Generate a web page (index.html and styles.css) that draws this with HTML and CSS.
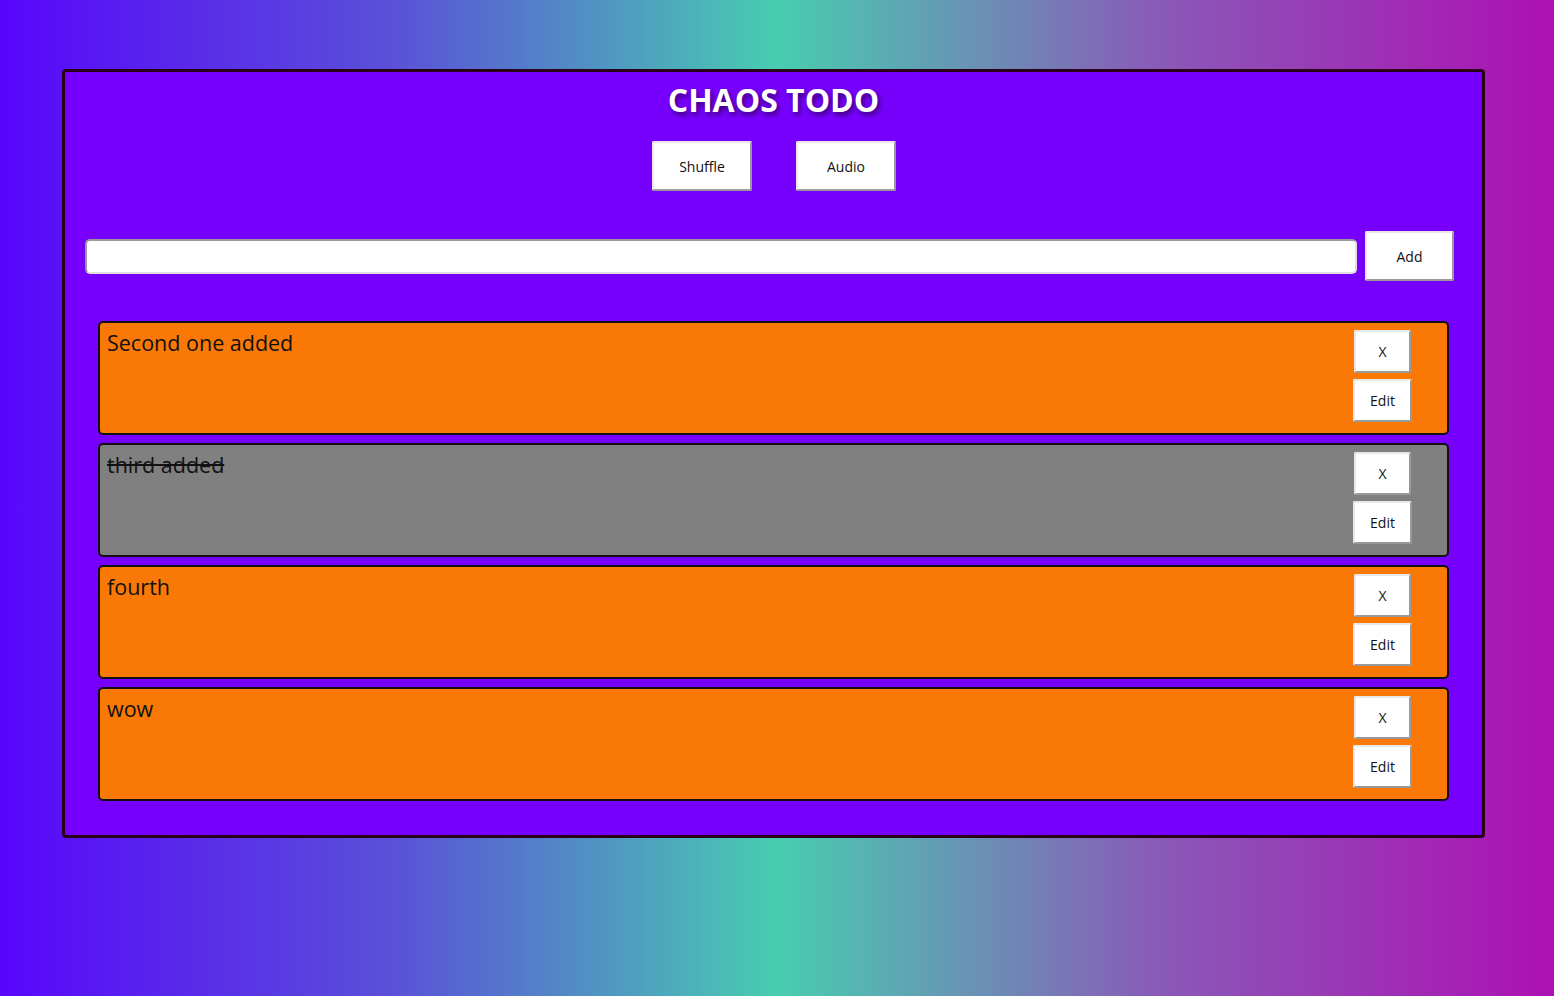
FILE: index.html
```html
<!DOCTYPE html>
<html>
<head>
<meta charset="utf-8">
<link rel="stylesheet" href="styles.css">
</head>
<body>
<div class="app">
  <h1 class="title">CHAOS TODO</h1>
  <div class="controls">
    <button class="btn btn-top">Shuffle</button>
    <button class="btn btn-top">Audio</button>
  </div>
  <div class="add-row">
    <input class="todo-input" type="text">
    <button class="btn btn-add">Add</button>
  </div>
  <div class="list">
    <div class="item">
      <span class="item-text">Second one added</span>
      <div class="item-actions">
        <button class="btn btn-x">X</button>
        <button class="btn btn-edit">Edit</button>
      </div>
    </div>
    <div class="item done">
      <span class="item-text">third added</span>
      <div class="item-actions">
        <button class="btn btn-x">X</button>
        <button class="btn btn-edit">Edit</button>
      </div>
    </div>
    <div class="item">
      <span class="item-text">fourth</span>
      <div class="item-actions">
        <button class="btn btn-x">X</button>
        <button class="btn btn-edit">Edit</button>
      </div>
    </div>
    <div class="item">
      <span class="item-text">wow</span>
      <div class="item-actions">
        <button class="btn btn-x">X</button>
        <button class="btn btn-edit">Edit</button>
      </div>
    </div>
  </div>
</div>
</body>
</html>
```

FILE: styles.css
```css
html, body {
  margin: 0;
  padding: 0;
}
body {
  width: 1554px;
  height: 996px;
  background: linear-gradient(to right, #5806fb 0%, #5a50d8 25%, #48cdb0 50%, #8a58b8 75%, #ad10b3 100%);
  font-family: "Open Sans", "Noto Sans", sans-serif;
  overflow: hidden;
}
.app {
  box-sizing: border-box;
  width: 1423px;
  height: 769px;
  margin: 69px 0 0 62px;
  background: #7700fd;
  border: 3px solid #2a0018;
  border-radius: 4px;
  display: flex;
  flex-direction: column;
  padding: 0 28px 0 20px;
}
.title {
  margin: 8px 0 0;
  text-align: center;
  color: #fff;
  font-size: 32px;
  font-weight: 700;
  line-height: 40px;
  text-shadow: 2px 3px 5px #3a0070;
  padding-left: 8px;
}
.controls {
  display: flex;
  justify-content: center;
  gap: 44px;
  margin-top: 21px;
  padding-left: 9px;
}
.btn {
  background: #fff;
  color: #111;
  font-family: "Open Sans", "Noto Sans", sans-serif;
  font-size: 14px;
  border: 2px solid;
  border-color: #e8e8e8 #9a9a9a #9a9a9a #e8e8e8;
  border-radius: 2px;
  padding: 0;
  cursor: pointer;
}
.btn-top {
  width: 100px;
  height: 50px;
}
.add-row {
  display: flex;
  align-items: center;
  gap: 8px;
  margin-top: 40px;
}
.todo-input {
  flex: 1;
  height: 35px;
  box-sizing: border-box;
  border: 2px solid;
  border-color: #9a9a9a #e0e0e0 #e0e0e0 #9a9a9a;
  border-radius: 5px;
  background: #fff;
}
.btn-add {
  width: 89px;
  height: 50px;
}
.list {
  display: flex;
  flex-direction: column;
  gap: 8px;
  margin: 40px 5px 0 13px;
}
.item {
  box-sizing: border-box;
  height: 114px;
  background: #f97806;
  border: 2px solid #111;
  border-radius: 5px;
  display: flex;
  justify-content: space-between;
  padding: 5px 35px 0 7px;
}
.item.done {
  background: #808080;
}
.item-text {
  font-size: 21.5px;
  line-height: 30px;
  color: #111;
}
.done .item-text {
  text-decoration: line-through;
}
.item-actions {
  display: flex;
  flex-direction: column;
  align-items: center;
  gap: 6px;
  padding-top: 2px;
}
.btn-x {
  width: 57px;
  height: 43px;
}
.btn-edit {
  width: 59px;
  height: 43px;
}
```
